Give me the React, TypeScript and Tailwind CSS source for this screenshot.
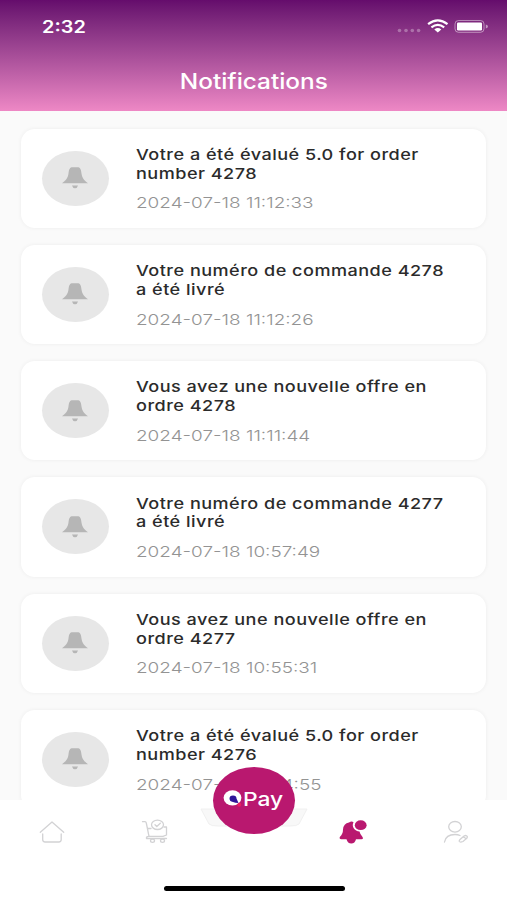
type Notice = { lines: [string, string]; date: string };

const notices: Notice[] = [
  { lines: ['Votre a été évalué 5.0 for order', 'number 4278'], date: '2024-07-18 11:12:33' },
  { lines: ['Votre numéro de commande 4278', 'a été livré'], date: '2024-07-18 11:12:26' },
  { lines: ['Vous avez une nouvelle offre en', 'ordre 4278'], date: '2024-07-18 11:11:44' },
  { lines: ['Votre numéro de commande 4277', 'a été livré'], date: '2024-07-18 10:57:49' },
  { lines: ['Vous avez une nouvelle offre en', 'ordre 4277'], date: '2024-07-18 10:55:31' },
  { lines: ['Votre a été évalué 5.0 for order', 'number 4276'], date: '2024-07-18 10:54:55' },
];

function StatusIcons() {
  return (
    <svg width="92" height="16" viewBox="0 0 92 16" fill="white">
      <g opacity="0.3">
        <circle cx="2.5" cy="11.5" r="1.8" />
        <circle cx="9" cy="11.5" r="1.8" />
        <circle cx="15.3" cy="11.5" r="1.8" />
        <circle cx="21.6" cy="11.5" r="1.8" />
      </g>
      <g fill="none" stroke="white" strokeWidth="2.2">
        <path d="M31.1 5.2Q40.8-2.4 50.5 5.2" />
        <path d="M34.4 8.3Q40.8 3.4 47.2 8.3" />
      </g>
      <path d="M37.3 10.4Q40.8 7.8 44.3 10.4L40.8 13.5Z" />
      <rect x="58" y="1.5" width="29" height="11.8" rx="3.5" fill="none" stroke="white" strokeOpacity="0.45" />
      <rect x="60" y="3.4" width="25" height="8" rx="1.2" />
      <path d="M88.8 5.5Q91 6 91 7.5T88.8 9.5Z" opacity="0.5" />
    </svg>
  );
}

function BellAvatar() {
  return (
    <div className="flex h-[55px] w-[67px] shrink-0 items-center justify-center rounded-[50%] bg-[#e7e7e7]">
      <svg width="28" height="24" viewBox="0 0 28 24" fill="#b6b6b6">
        <path d="M1 17.2C4.500 14.500 6.800 12.500 7.500 7.500C8 3 9 1.300 11.500 1.300H16.500C19 1.300 20 3 20.500 7.500C21.200 12.500 23.500 14.500 27 17.200Z" />
        <path d="M11 19.500H17Q16.300 22.200 14 22.200T11 19.500Z" />
      </svg>
    </div>
  );
}

function NoticeCard({ notice }: { notice: Notice }) {
  return (
    <article className="flex h-[99.25px] shrink-0 items-center rounded-[14px] bg-white pl-[20.500px] shadow-[0_0_4px_rgba(0,0,0,0.06)]">
      <BellAvatar />
      <div className="ml-[27.500px] flex flex-col items-start pt-[3px] whitespace-nowrap">
        {notice.lines.map((line) => (
          <p key={line} className="origin-left scale-x-[1.205] text-[15px] leading-[18.750px] font-medium tracking-[0.4px] text-[#2b2b2b]">
            {line}
          </p>
        ))}
        <p className="mt-[10px] origin-left scale-x-[1.262] text-[15px] leading-5 font-light text-[#939393]">{notice.date}</p>
      </div>
    </article>
  );
}

function HomeIcon() {
  return (
    <svg width="26" height="24" viewBox="0 0 26 24" fill="none" stroke="#d2d2d4" strokeWidth="1.300" strokeLinecap="round" strokeLinejoin="round">
      <path d="M1.300 12.300 13 2l11.700 10.300M3.700 14v5.500q0 2.500 2.500 2.500h13.500q2.500 0 2.500-2.500V14" />
    </svg>
  );
}

function CartIcon() {
  return (
    <svg width="28" height="26" viewBox="0 0 28 26" fill="none" stroke="#d2d2d4" strokeWidth="1.300" strokeLinecap="round" strokeLinejoin="round">
      <path d="M1.500 2.700H4q1 0 1.300 1.300L8 17.300M10 9.500H7M23 8H25.500V16L22 17.300H7.500Q5 17.500 5.500 19.500H25.500" />
      <ellipse cx="16.500" cy="5.800" rx="6" ry="4.700" />
      <path d="M14 5.800 15.800 7.500 19.300 4.300" />
      <ellipse cx="11.500" cy="21.800" rx="2" ry="1.600" />
      <ellipse cx="21.500" cy="21.800" rx="2" ry="1.600" />
    </svg>
  );
}

function ActiveBellIcon() {
  return (
    <svg width="28" height="24" viewBox="0 0 28 24" fill="#b9186f">
      <path d="M14.500 2.200A7.500 6.500 0 0 0 20.500 11.500Q21 14 23.200 16.500Q25 19.300 22.500 19.300H17Q16 23.500 12.300 23.500T7.500 19.300H2Q-.2 19 1 16.700Q4 14 4 9.500Q4.500 3.500 10 2.600Q12.500 .8 14.500 2.200Z" />
      <ellipse cx="21.700" cy="5.200" rx="5.900" ry="4.900" />
    </svg>
  );
}

function ProfileIcon() {
  return (
    <svg width="26" height="24" viewBox="0 0 26 24" fill="none" stroke="#d2d2d4" strokeWidth="1.300" strokeLinecap="round">
      <ellipse cx="12" cy="6.800" rx="6.300" ry="5.300" />
      <path d="M1.500 22C2.500 16.500 7 14.500 12 14.500Q15 14.500 17 15.500" />
      <path d="M17 19.500 21 16Q23.500 14.800 24.300 16.500Q24.500 17.800 23.500 18.600L20 21.500Q17 22.500 16.300 21.500Q16 20.500 17 19.500ZM20.500 17 23 18.500" />
    </svg>
  );
}

function PayButton() {
  return (
    <button className="absolute top-[-33.500px] left-[212.500px] flex h-[67.500px] w-[82.500px] items-center rounded-[50%] bg-[#b9186f] pl-[10px] text-white">
      <svg width="20" height="20" viewBox="0 0 20 20" className="shrink-0">
        <ellipse cx="9.500" cy="7.800" rx="8.900" ry="7.600" fill="white" />
        <path d="M6.500 8.500Q6.500 5.500 10 5.500T13.500 8.500L15.500 13Q12 13 10 12Q6.500 11.500 6.500 8.500Z" fill="#2f1599" />
        <circle cx="16.300" cy="14.800" r="2" fill="#e91e63" />
      </svg>
      <span className="origin-left scale-x-[1.200] text-[19px] leading-6 font-medium">Pay</span>
    </button>
  );
}

export default function App() {
  return (
    <div className="flex h-[900px] w-[507px] flex-col overflow-hidden bg-[#fafafa] font-[Inter,'Liberation_Sans',sans-serif]">
      <header className="flex h-[111px] shrink-0 flex-col bg-linear-to-b from-[#650c6c] to-[#ee88c5] text-white">
        <div className="flex h-[53px] items-center justify-between pr-[18.500px] pl-[42px]">
          <span className="origin-left scale-x-[1.170] text-[17px] leading-5 font-semibold">2:32</span>
          <StatusIcons />
        </div>
        <h1 className="mt-4 self-center scale-x-[1.160] text-[21px] leading-[26px] font-medium">Notifications</h1>
      </header>

      <main className="flex h-[689px] shrink-0 flex-col gap-[17px] overflow-hidden px-[21px] pt-[17.500px]">
        {notices.map((notice) => (
          <NoticeCard key={notice.date} notice={notice} />
        ))}
      </main>

      <nav className="relative h-[100px] shrink-0 bg-white">
        <svg className="absolute top-2 left-[200px]" width="108" height="24" viewBox="0 0 108 24">
          <path d="M1 1H107L99 16Q97 18 90 18H18Q11 18 9 16Z" fill="#f8f8f8" stroke="#f0f0f0" />
        </svg>
        <div className="flex items-center pt-[19px] pl-[39px]">
          <HomeIcon />
          <div className="mr-[170px] ml-[76px]"><CartIcon /></div>
          <ActiveBellIcon />
          <div className="ml-[76px]"><ProfileIcon /></div>
        </div>
        <PayButton />
        <div className="absolute bottom-[9px] left-[164px] h-[5.500px] w-[180.500px] rounded-full bg-black" />
      </nav>
    </div>
  );
}
